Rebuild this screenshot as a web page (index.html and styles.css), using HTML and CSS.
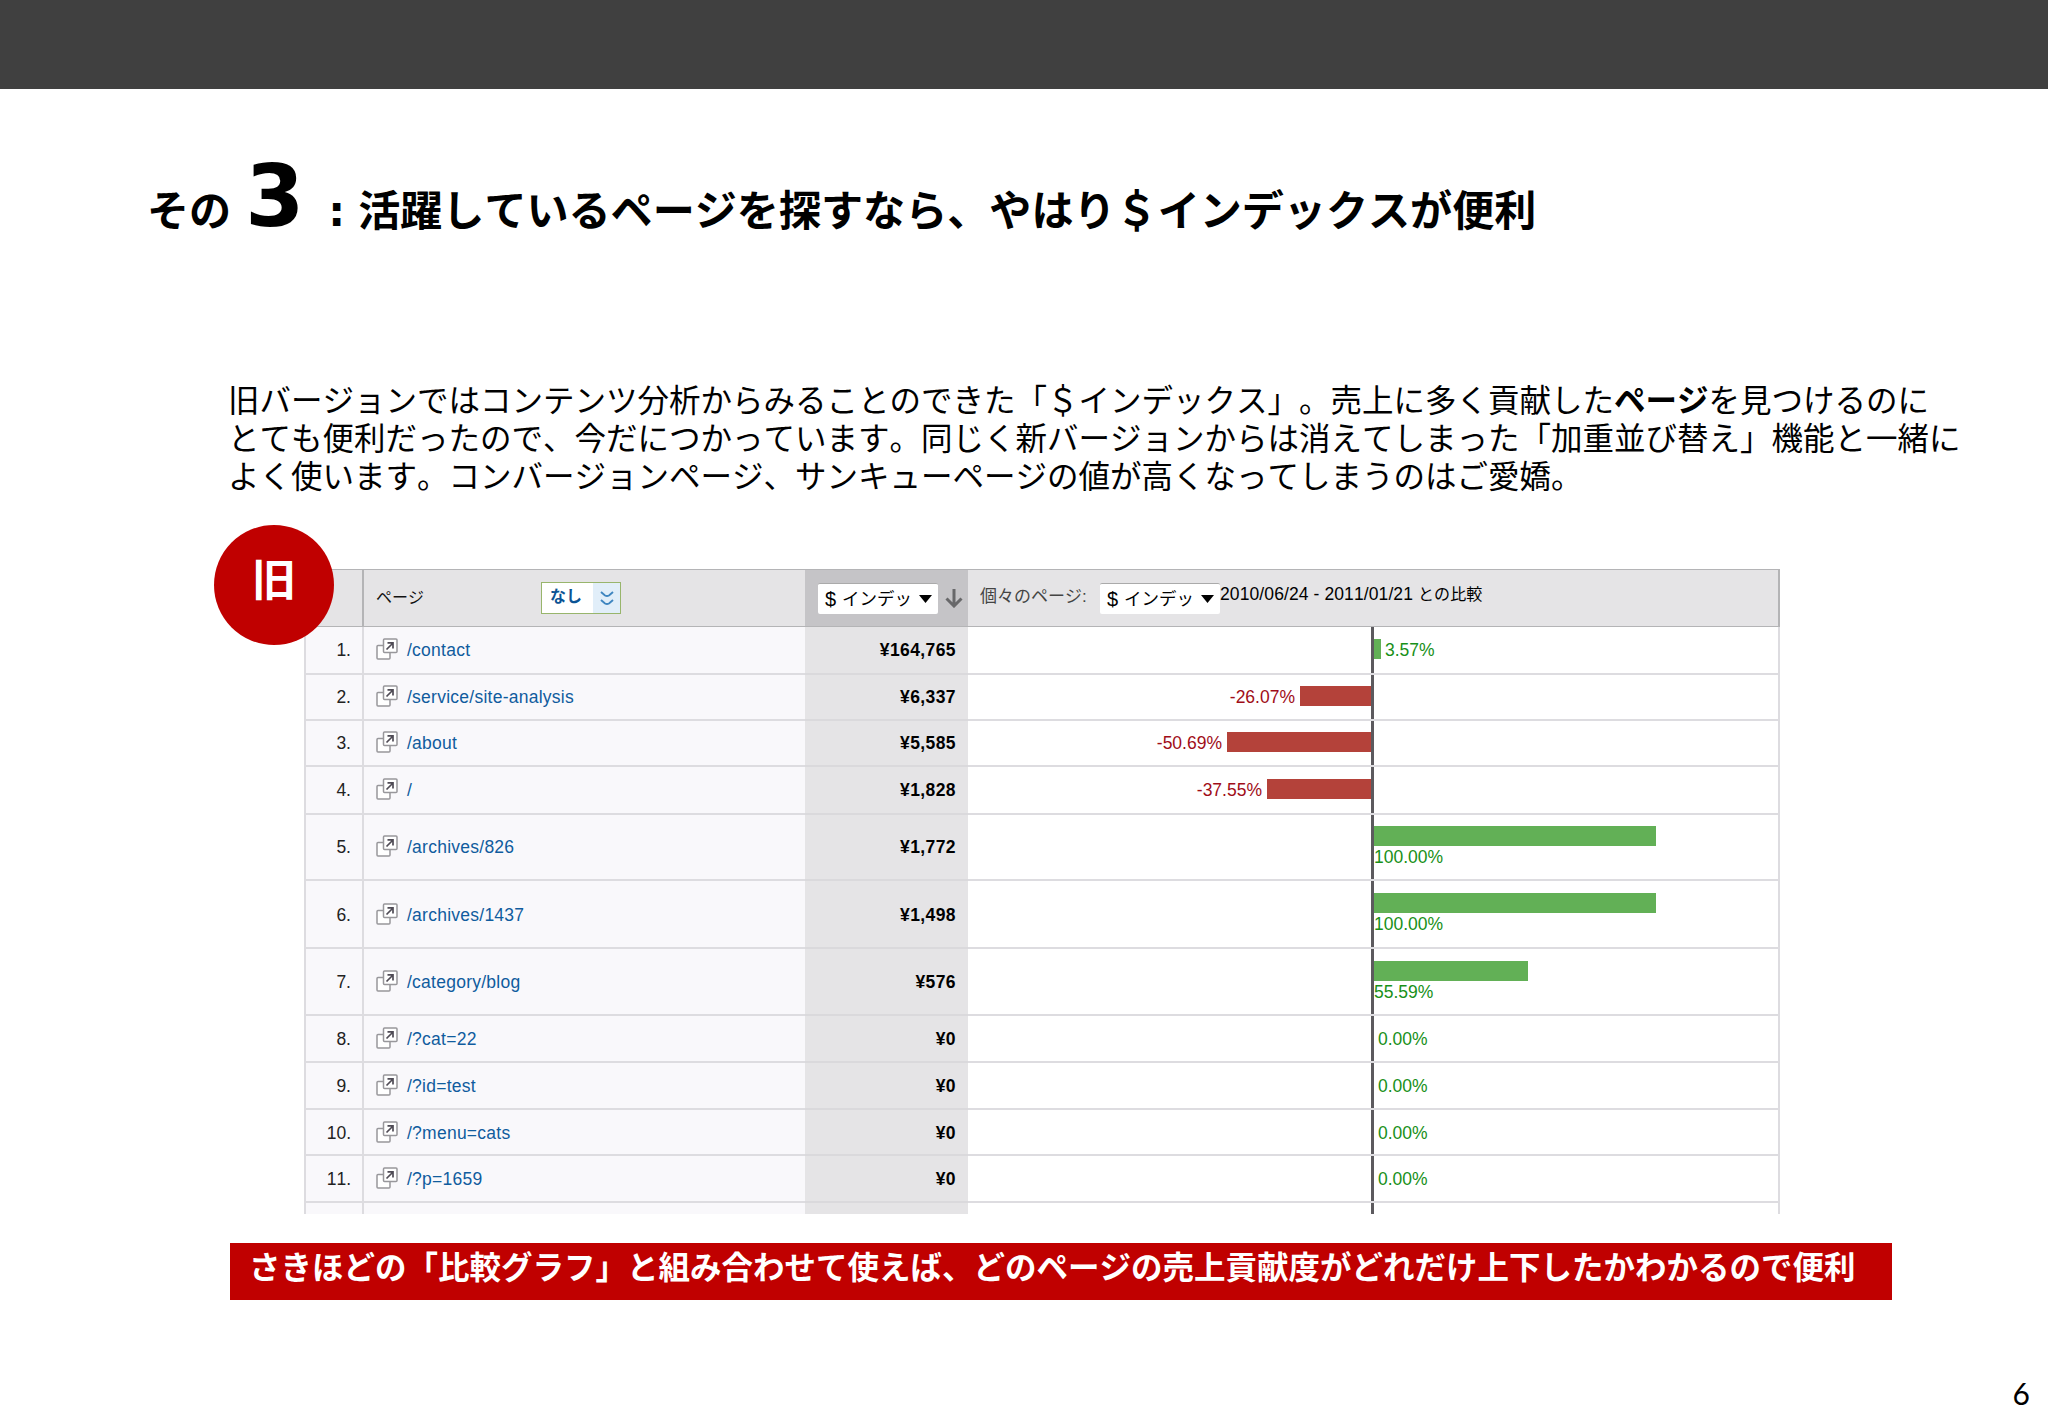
FILE: index.html
```html
<!DOCTYPE html>
<html lang="ja">
<head>
<meta charset="utf-8">
<title>$インデックス</title>
<link rel="stylesheet" href="styles.css">
</head>
<body>
<svg width="0" height="0" class="defs">
  <symbol id="open" viewBox="0 0 22 22">
    <path d="M7 7.500H2Q1 7.500 1 8.500V20Q1 21 2 21H13Q14 21 14 20V15" fill="#fff" stroke="#98979b" stroke-width="1.500"/>
    <rect x="7.500" y="1" width="13.500" height="13.500" rx="1" fill="#fff" stroke="#98979b" stroke-width="1.500"/>
    <path d="M10.500 11.500L16.500 5.500M11.500 4.800H17V10.500" fill="none" stroke="#4f4b55" stroke-width="1.700"/>
  </symbol>
</svg>
<header class="topbar"></header>
<h1 class="title"><span>その</span><span class="num">3</span><span class="colon">:</span><span>活躍しているページを探すなら、やはり＄インデックスが便利</span></h1>
<p class="lead">旧バージョンではコンテンツ分析からみることのできた「＄インデックス」。売上に多く貢献した<b>ページ</b>を見つけるのに<br>とても便利だったので、今だにつかっています。同じく新バージョンからは消えてしまった「加重並び替え」機能と一緒に<br>よく使います。コンバージョンページ、サンキューページの値が高くなってしまうのはご愛嬌。</p>
<section class="report">
  <div class="badge">旧</div>
  <div class="row head">
    <div class="no"></div>
    <div class="page"><span class="label">ページ</span>
      <span class="filter"><b>なし</b><i><svg width="14" height="15" viewBox="0 0 14 15" fill="none" stroke="#3f86c0" stroke-width="1.900"><path d="M1 1L5 4.500Q7 5.500 9 4.500L13 1M1 9L5 12.500Q7 13.500 9 12.500L13 9"/></svg></i></span></div>
    <div class="value"><span class="select"><em>$</em>インデッ<svg width="13" height="8"><path d="M0 0H13L6.500 8Z"/></svg></span>
      <svg class="sort" width="18" height="19" viewBox="0 0 18 19" fill="none" stroke="#68686a" stroke-width="3"><path d="M9 0V17M1.500 9.500L9 17L16.500 9.500"/></svg></div>
    <div class="chart"><span class="each">個々のページ:</span><span class="select"><em>$</em>インデッ<svg width="13" height="8"><path d="M0 0H13L6.500 8Z"/></svg></span><span class="period">2010/06/24 - 2011/01/21 <small>との比較</small></span></div>
  </div>
  <div class="row h48"><div class="no">1.</div><div class="page"><svg class="ic"><use href="#open"/></svg>/contact</div><div class="value">¥164,765</div><div class="chart"><div class="neg"></div><div class="pos"><i style="width:7px"></i><span>3.57%</span></div></div></div>
  <div class="row h46"><div class="no">2.</div><div class="page"><svg class="ic"><use href="#open"/></svg>/service/site-analysis</div><div class="value">¥6,337</div><div class="chart"><div class="neg"><span>-26.07%</span><i style="width:71px"></i></div><div class="pos"></div></div></div>
  <div class="row h46"><div class="no">3.</div><div class="page"><svg class="ic"><use href="#open"/></svg>/about</div><div class="value">¥5,585</div><div class="chart"><div class="neg"><span>-50.69%</span><i style="width:144px"></i></div><div class="pos"></div></div></div>
  <div class="row h48"><div class="no">4.</div><div class="page"><svg class="ic"><use href="#open"/></svg>/</div><div class="value">¥1,828</div><div class="chart"><div class="neg"><span>-37.55%</span><i style="width:104px"></i></div><div class="pos"></div></div></div>
  <div class="row h66"><div class="no">5.</div><div class="page"><svg class="ic"><use href="#open"/></svg>/archives/826</div><div class="value">¥1,772</div><div class="chart"><div class="neg"></div><div class="pos wrap"><i style="width:282px"></i><span>100.00%</span></div></div></div>
  <div class="row h68 low"><div class="no">6.</div><div class="page"><svg class="ic"><use href="#open"/></svg>/archives/1437</div><div class="value">¥1,498</div><div class="chart"><div class="neg"></div><div class="pos wrap"><i style="width:282px"></i><span>100.00%</span></div></div></div>
  <div class="row h67 low"><div class="no">7.</div><div class="page"><svg class="ic"><use href="#open"/></svg>/category/blog</div><div class="value">¥576</div><div class="chart"><div class="neg"></div><div class="pos wrap"><i style="width:154px"></i><span>55.59%</span></div></div></div>
  <div class="row h47 low"><div class="no">8.</div><div class="page"><svg class="ic"><use href="#open"/></svg>/?cat=22</div><div class="value">¥0</div><div class="chart"><div class="neg"></div><div class="pos"><span>0.00%</span></div></div></div>
  <div class="row h47 low"><div class="no">9.</div><div class="page"><svg class="ic"><use href="#open"/></svg>/?id=test</div><div class="value">¥0</div><div class="chart"><div class="neg"></div><div class="pos"><span>0.00%</span></div></div></div>
  <div class="row h46 low"><div class="no">10.</div><div class="page"><svg class="ic"><use href="#open"/></svg>/?menu=cats</div><div class="value">¥0</div><div class="chart"><div class="neg"></div><div class="pos"><span>0.00%</span></div></div></div>
  <div class="row h47 low"><div class="no">11.</div><div class="page"><svg class="ic"><use href="#open"/></svg>/?p=1659</div><div class="value">¥0</div><div class="chart"><div class="neg"></div><div class="pos"><span>0.00%</span></div></div></div>
  <div class="row cut"><div class="no"></div><div class="page"></div><div class="value"></div><div class="chart"><div class="neg"></div><div class="pos"></div></div></div>
</section>
<p class="banner">さきほどの「比較グラフ」と組み合わせて使えば、どのページの売上貢献度がどれだけ上下したかわかるので便利</p>
<footer class="pageno">6</footer>
</body>
</html>
```

FILE: styles.css
```css
* { box-sizing: border-box; }
body {
  margin: 0;
  height: 1418px;
  overflow: hidden;
  background: #fff;
  color: #000;
  font-family: "Noto Sans CJK JP", sans-serif;
  font-kerning: none;
  text-spacing-trim: space-all;
  display: flex;
  flex-direction: column;
}
.defs { display: none; }
.topbar { height: 89px; background: #404040; flex: none; }

.title {
  margin: 0;
  height: 283px;
  padding: 48px 0 0 147px;
  font-size: 42.080px;
  line-height: 120px;
  font-weight: 700;
  display: flex;
  align-items: baseline;
  white-space: nowrap;
  flex: none;
}
.title .num { width: 84px; padding-left: 14px; font: 700 85px/120px "DejaVu Sans", sans-serif; }
.title .colon { width: 43px; text-align: center; font-family: "DejaVu Sans", sans-serif; }

.lead {
  margin: 0;
  padding: 7px 0 0 228px;
  height: 197px;
  font-size: 31.500px;
  line-height: 38px;
  white-space: nowrap;
  flex: none;
}

.report {
  position: relative;
  width: 1476px;
  margin-left: 304px;
  font-family: "Liberation Sans", "Noto Sans CJK JP", sans-serif;
  font-size: 17.500px;
  flex: none;
}
.badge {
  position: absolute;
  left: -90px;
  top: -44px;
  width: 120px;
  height: 120px;
  border-radius: 50%;
  background: #c00000;
  color: #fff;
  font: 700 44px/105px "Noto Sans CJK JP", sans-serif;
  text-align: center;
}
.row { display: grid; grid-template-columns: 60px 441px 163px 812px; }
.row > div { display: flex; align-items: center; border-bottom: 2px solid #dddce0; min-width: 0; }
.row > .no { justify-content: flex-end; padding-right: 11px; border-left: 2px solid #dddce0; border-right: 2px solid #dddce0; background: #f9f8fb; color: #222; }
.row > .page { background: #f9f8fb; color: #105c9e; padding-left: 12px; letter-spacing: .25px; }
.row > .value { justify-content: flex-end; padding-right: 12px; background: #e5e4e6; border-bottom-color: #dad9dc; font-weight: 700; letter-spacing: .4px; }
.row > .chart { border-right: 2px solid #dddce0; align-items: stretch; }
.row.low > .no, .row.low > .page, .row.low > .value { padding-top: 2px; }
.ic { width: 22px; height: 22px; margin: -3px 9px 0 0; flex: none; }
.h46 { height: 46px; }
.h47 { height: 47px; }
.h48 { height: 48px; }
.h66 { height: 66px; }
.h67 { height: 67px; }
.h68 { height: 68px; }
.row.cut { height: 11px; }
.row.cut > div { border-bottom: 0; }

.neg { width: 406px; border-right: 3px solid #5c5a5e; display: flex; justify-content: flex-end; align-items: center; color: #a00d18; }
.neg i { height: 20px; margin: -3px 0 0 5px; background: #b4423a; }
.pos { display: flex; align-items: center; color: #189018; }
.pos i { height: 20px; margin-top: -3px; background: #62b056; }
.pos span { margin-left: 4px; }
.low .pos { padding-top: 2px; }
.pos.wrap { flex-direction: column; align-items: flex-start; padding-top: 11px; }
.low .pos.wrap { padding-top: 12px; }
.pos.wrap i { margin: 0; flex: none; }
.pos.wrap span { margin: 1px 0 0 0; line-height: 20px; }

.row.head { height: 58px; }
.row.head > div { background: #e5e4e6; border-top: 1px solid #b4b4b6; border-bottom: 1px solid #b4b4b6; border-color: #b4b4b6; }
.row.head > .page { color: #111; font-size: 16px; letter-spacing: 0; }
.head .label { width: 165px; padding-bottom: 5px; }
.filter { display: flex; width: 80px; height: 32px; background: #fff; border: 1px solid #98b56c; line-height: 28px; }
.filter b { flex: 1; padding-left: 8px; color: #0b5394; font-size: 16px; }
.filter i { width: 27px; background: #e1eef9; display: flex; align-items: center; justify-content: center; }
.row.head > .value { background: #c5c4c7; padding-right: 5px; justify-content: space-between; padding-left: 13px; font-weight: 400; letter-spacing: 0; }
.row.head > .chart { align-items: center; padding-left: 12px; white-space: nowrap; }
.select { display: flex; align-items: center; width: 120px; height: 31px; padding-left: 7px; background: #fff; border-top: 1px solid #aaa; font-size: 17.500px; line-height: 28px; flex: none; border-radius: 2px; }
.select em { font-style: normal; font-size: 20px; width: 17px; }
.select svg { margin-left: 7px; }
.each { width: 120px; color: #444; font-size: 17px; padding-bottom: 7px; }
.period { padding-bottom: 11px; letter-spacing: .1px; }
.period small { font-size: 16px; }

.banner {
  margin: 29px 0 0 230px;
  width: 1662px;
  height: 57px;
  padding-left: 19px;
  background: #c00000;
  color: #fff;
  font-size: 31.500px;
  font-weight: 700;
  line-height: 45px;
  white-space: nowrap;
  flex: none;
}
.pageno { margin: 75px 18px 0 0; text-align: right; font: 400 30px/36px Lato, sans-serif; }
```
